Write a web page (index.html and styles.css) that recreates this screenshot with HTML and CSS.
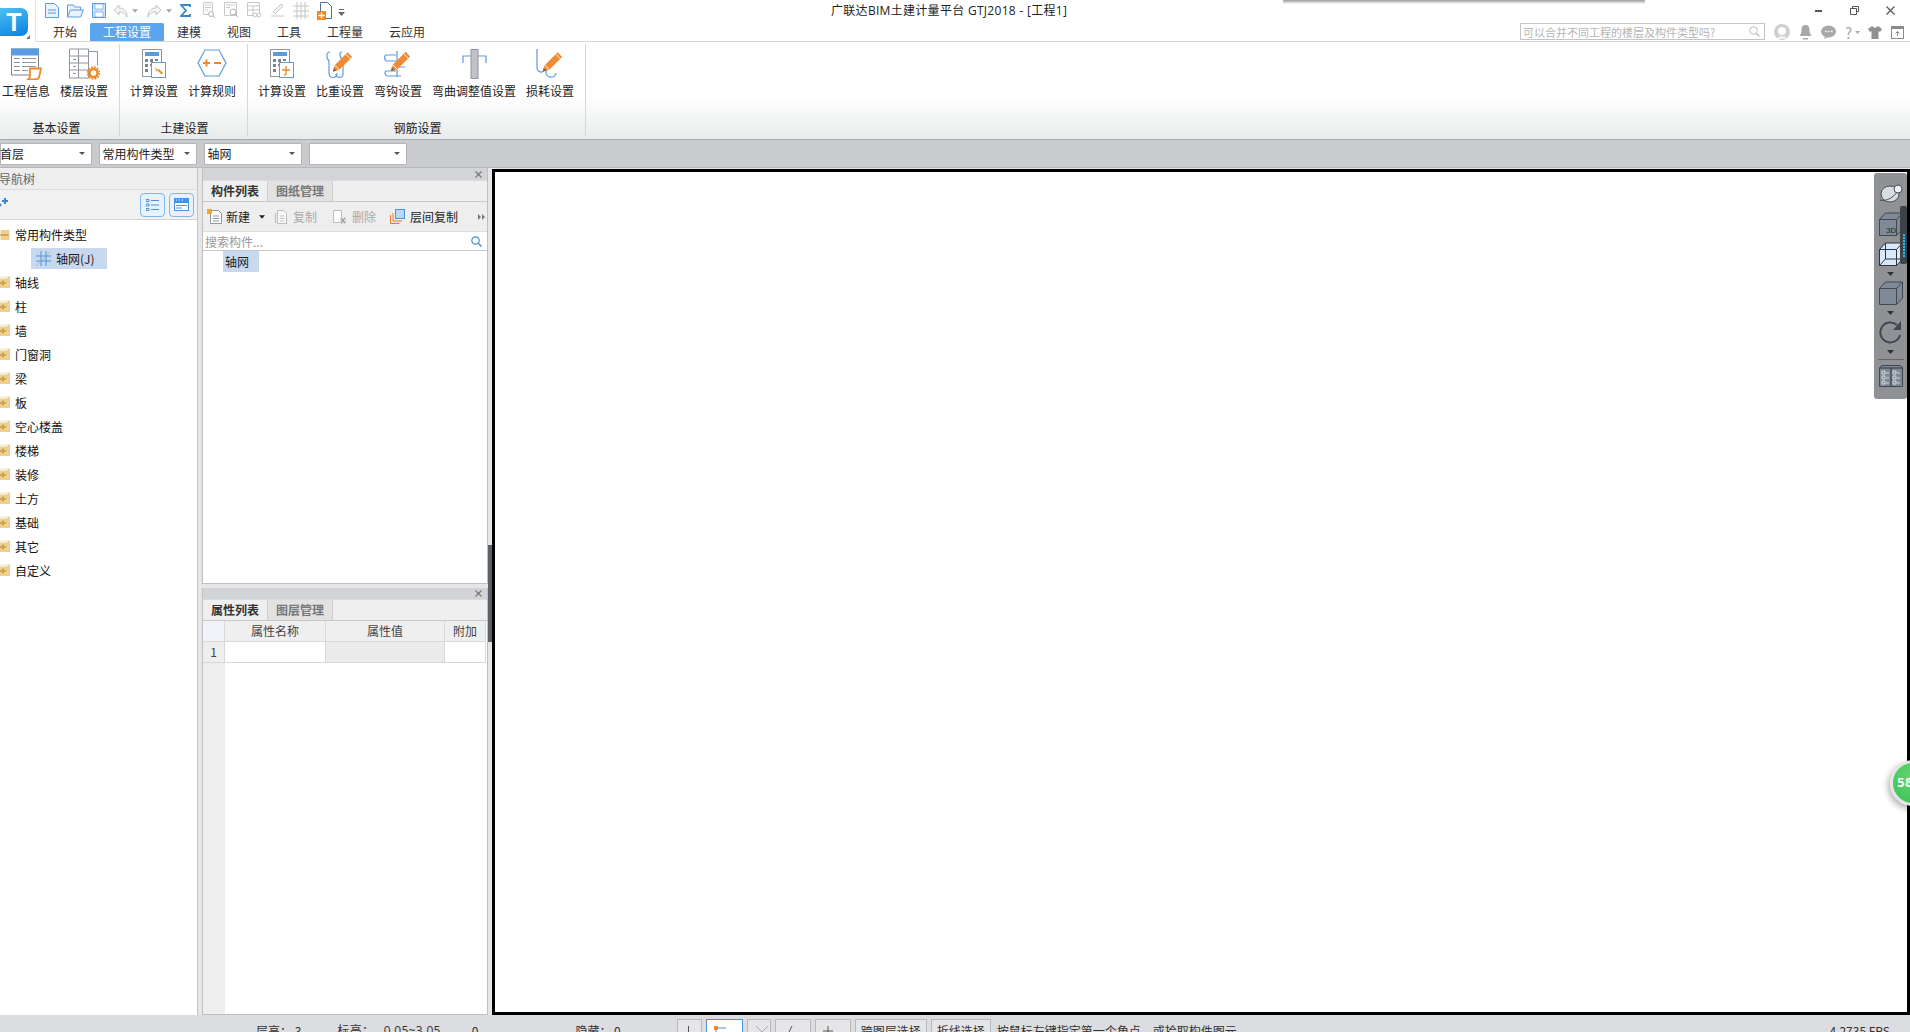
FILE: index.html
```html
<!DOCTYPE html>
<html lang="zh-CN">
<head>
  <meta charset="UTF-8">
  <title>广联达BIM土建计量平台 GTJ2018</title>
  <link rel="stylesheet" href="styles.css">
</head>
<body>
  <svg class="defs" width="0" height="0">
    <defs>
      <symbol id="pencil" viewBox="0 0 24 24">
        <path d="M1 23l2-7L17 2l5 5L8 21z" fill="#f08a34"/>
        <path d="M3 16l5 5M15 4l5 5" stroke="#fff" stroke-width="1" fill="none"/>
        <path d="M1 23l1-4 3 3z" fill="#8a5a30"/>
      </symbol>
      <symbol id="calc" viewBox="0 0 24 30">
        <rect x=".5" y=".5" width="19" height="27" fill="#fff" stroke="#8f959c"/>
        <rect x="3" y="3" width="14" height="4" fill="#5b9be0"/>
        <path d="M3 10h3v3H3zM8 10h3v3H8zM13 10h3v2h-3zM3 15h3v3H3zM8 15h3v2H8zM3 20h3v3H3z" fill="#7d8389"/>
        <rect x="9.500" y="13.500" width="14" height="15" fill="#fff" stroke="#5b9be0"/>
      </symbol>
      <symbol id="folder-plus" viewBox="0 0 10 12">
        <path d="M0 2.500h7l1-2h2v11.500H0z" fill="#f0cf8e"/>
        <path d="M0 1h8" stroke="#f3e3c0"/>
        <path d="M0 7h6M3 4.500v5" stroke="#c59a4a" stroke-width="1.500"/>
      </symbol>
      <symbol id="small-caret" viewBox="0 0 7 4">
        <path d="M0 0h7L3.500 4z" fill="currentColor"/>
      </symbol>
    </defs>
  </svg>

  <div class="app">
    <header class="topbar">
      <div class="logo-box">
        <div class="logo">T</div>
        <span class="logo-corner"></span>
      </div>
      <div class="topbar-main">
        <div class="title-row">
          <div class="qat">
            <svg class="q" width="14" height="15" viewBox="0 0 14 15"><path d="M.5.500h9l4 4v10H.5z" fill="#eaf3fc" stroke="#5b9be0"/><path d="M3 7h8M3 10h8" stroke="#5b9be0"/></svg>
            <svg class="q" width="17" height="15" viewBox="0 0 17 15"><path d="M.5 14V2h6l1 2h6v3M.5 14l3-7h13l-3 7z" fill="#eaf3fc" stroke="#5b9be0"/></svg>
            <svg class="q q-save" width="14" height="15" viewBox="0 0 14 15"><path d="M.5.500h13v14H.5z" fill="#cfe3f8" stroke="#5b9be0"/><path d="M3 1h8v5H3zM3 9h8v5H3z" fill="#fff" stroke="#5b9be0" stroke-width=".6"/></svg>
            <svg class="q q-undo" width="15" height="14" viewBox="0 0 15 14"><path d="M6 1L1 6l5 5V8c4 0 6 1 8 5 0-6-3-9-8-9z" fill="#f4f4f4" stroke="#c4c4c4"/></svg>
            <svg class="q-caret" width="6" height="4"><use href="#small-caret"/></svg>
            <svg class="q q-redo" width="15" height="14" viewBox="0 0 15 14"><path d="M9 1l5 5-5 5V8c-4 0-6 1-8 5 0-6 3-9 8-9z" fill="#f4f4f4" stroke="#c4c4c4"/></svg>
            <svg class="q-caret" width="6" height="4"><use href="#small-caret"/></svg>
            <svg class="q q-sigma" width="11" height="13" viewBox="0 0 11 13"><path d="M10 3V1H1l5 5.500L1 12h9v-2" fill="none" stroke="#3d86cf" stroke-width="1.800"/></svg>
            <svg class="q q-grey" width="15" height="17" viewBox="0 0 15 17"><path d="M2.500.500h9v12h-9zM4 3h6M4 5.500h6M4 8h3" fill="#fff" stroke="#c8c8c8"/><circle cx="10" cy="12" r="2.500" fill="#fff" stroke="#b4b4b4"/><path d="M12 14l2 2" stroke="#b4b4b4"/></svg>
            <svg class="q q-grey" width="15" height="17" viewBox="0 0 15 17"><path d="M.5.500h12v13H.5zM2 3h9M2 5.500h4" fill="#fff" stroke="#c8c8c8"/><circle cx="9" cy="10" r="3" fill="#fff" stroke="#b4b4b4"/><path d="M11 12l3 3" stroke="#b4b4b4"/></svg>
            <svg class="q q-grey" width="15" height="17" viewBox="0 0 15 17"><path d="M.5.500h12v13H.5zM.5 4h12M.5 8h12M6 4v9" fill="#fff" stroke="#c8c8c8"/><circle cx="8" cy="13" r="2" fill="#fff" stroke="#c4c4c4"/><circle cx="12" cy="13" r="2" fill="#fff" stroke="#c4c4c4"/></svg>
            <svg class="q q-grey" width="15" height="15" viewBox="0 0 15 15"><path d="M3 10l8-8 2 2-8 8zM1 14h13" fill="#f2f2f2" stroke="#c8c8c8"/></svg>
            <svg class="q q-grey" width="16" height="17" viewBox="0 0 16 17"><path d="M0 4h16M0 9h16M0 14h16M4 0v17M8 0v17M12 0v17" fill="none" stroke="#c4c4c4"/></svg>
            <svg class="q q-grey" width="15" height="18" viewBox="0 0 15 18"><path d="M3.500.500h7l4 4v12h-11z" fill="#fff" stroke="#50708e"/><rect y="9" width="9" height="9" fill="#ef8a25"/><path d="M1.500 13.500h6M4.500 10.500v6" stroke="#fff" stroke-width="1.300"/></svg>
            <svg class="q-more" width="7" height="7" viewBox="0 0 7 7"><path d="M1 .5h5" stroke="#666"/><path d="M0 3h7L3.500 7z" fill="#666"/></svg>
          </div>
          <h1 class="app-title">广联达BIM土建计量平台 GTJ2018 - [工程1]</h1>
          <div class="win-ctrl">
            <svg width="8" height="3"><rect y="1" width="7" height="2" fill="#555"/></svg>
            <svg width="9" height="9" viewBox="0 0 9 9"><path d="M2.500 2.500V.5h6v5h-2M.5 2.500h6v6h-6z" fill="none" stroke="#555"/></svg>
            <svg width="9" height="9" viewBox="0 0 9 9"><path d="M.5.500l8 8M8.500.500l-8 8" stroke="#555" stroke-width="1.200"/></svg>
          </div>
        </div>
        <div class="tab-row">
          <nav class="tabs">
            <span class="tab">开始</span>
            <span class="tab active">工程设置</span>
            <span class="tab">建模</span>
            <span class="tab">视图</span>
            <span class="tab">工具</span>
            <span class="tab">工程量</span>
            <span class="tab">云应用</span>
          </nav>
          <div class="help-search">
            <span>可以合并不同工程的楼层及构件类型吗?</span>
            <svg width="11" height="11" viewBox="0 0 11 11"><circle cx="4.500" cy="4.500" r="3.800" fill="none" stroke="#bbb"/><path d="M7.500 7.500l3 3" stroke="#bbb" stroke-width="1.300"/></svg>
          </div>
          <div class="user-icons">
            <svg width="16" height="16" viewBox="0 0 16 16"><circle cx="8" cy="8" r="8" fill="#cfcfcf"/><circle cx="8" cy="7" r="4" fill="#fff"/><path d="M3 15c1-4 9-4 10 0" fill="#f2f2f2"/></svg>
            <svg width="13" height="15" viewBox="0 0 13 15"><path d="M6.500 0c3 0 4 2 4 5 0 3 1 4 2 6H.5c1-2 2-3 2-6 0-3 1-5 4-5z" fill="#a8a8a8"/><path d="M4 13h5v1.500H4z" fill="#a8a8a8"/></svg>
            <svg width="15" height="14" viewBox="0 0 15 14"><ellipse cx="7.500" cy="6.500" rx="7.500" ry="6" fill="#a8a8a8"/><path d="M4 11l-1 3 4-2z" fill="#a8a8a8"/><path d="M4 6.500h1.500M7 6.500h1.500M10 6.500h1.500" stroke="#fff" stroke-width="1.500"/></svg>
            <span class="help-mark">?<svg width="5" height="3" viewBox="0 0 7 4"><use href="#small-caret"/></svg></span>
            <svg width="14" height="13" viewBox="0 0 14 13"><path d="M4 0L0 3l2 3 1.500-1v8h7V5L12 6l2-3-4-3-3 2z" fill="#909090"/></svg>
            <svg width="13" height="13" viewBox="0 0 13 13"><rect x=".5" y=".5" width="12" height="12" fill="#fff" stroke="#8a8a8a"/><rect width="13" height="3" fill="#8a8a8a"/><path d="M6.500 10V5.500M4.500 7.500l2-2 2 2" fill="none" stroke="#8a8a8a"/></svg>
          </div>
        </div>
      </div>
    </header>

    <section class="ribbon">
      <div class="rb-group rb-first">
        <div class="rb-items">
          <div class="rb-btn">
            <svg width="31" height="31" viewBox="0 0 31 31"><rect x=".5" y=".5" width="27" height="26" fill="#fff" stroke="#7d8389"/><rect width="28" height="7" fill="#5b9be0"/><path d="M3 10h6M11 10h14M3 14h6M11 14h14M3 18h6M11 18h14M3 22h6M11 22h6" stroke="#8f959c"/><path d="M19 20h11l-2 9c-1 2-3 2-4 2h-7c1-1 2-2 2-4z" fill="#fff" stroke="#ef8a25" stroke-width="1.800"/></svg>
            <span>工程信息</span>
          </div>
          <div class="rb-btn">
            <svg width="31" height="31" viewBox="0 0 31 31"><path d="M.5.500h19v29H.5zM.5 7.500h19M.5 14.500h19M.5 21.500h19M9.500.500v29M19.500 3h9v14" fill="#fff" stroke="#8f959c"/><path d="M4 11h3M4 18h3M4 25h3" stroke="#8f959c"/><circle cx="24.500" cy="24.500" r="4" fill="#fff" stroke="#ef8a25" stroke-width="2.500"/><circle cx="24.500" cy="24.500" r="6" fill="none" stroke="#ef8a25" stroke-width="1.500" stroke-dasharray="2 1.100"/></svg>
            <span>楼层设置</span>
          </div>
        </div>
        <div class="rb-label">基本设置</div>
      </div>
      <div class="rb-group">
        <div class="rb-items">
          <div class="rb-btn">
            <svg width="24" height="30" viewBox="0 0 24 30"><use href="#calc"/><path d="M13 18l3 3 1-1 4 4-1.500 1.500-4-4-1 1z" fill="#ef8a25"/></svg>
            <span>计算设置</span>
          </div>
          <div class="rb-btn">
            <svg width="30" height="30" viewBox="0 0 30 30"><path d="M8 1h14l7 13-7 13H8L1 14z" fill="#fff" stroke="#5b9be0" stroke-width="1.200"/><path d="M6 14h7M9.500 10.500v7M17 14h7" stroke="#ef8a25" stroke-width="2"/></svg>
            <span>计算规则</span>
          </div>
        </div>
        <div class="rb-label">土建设置</div>
      </div>
      <div class="rb-group">
        <div class="rb-items">
          <div class="rb-btn">
            <svg width="24" height="30" viewBox="0 0 24 30"><use href="#calc"/><path d="M12 21h8M16 17v8c0 1-1 1-2 1" fill="none" stroke="#ef8a25" stroke-width="1.400"/></svg>
            <span>计算设置</span>
          </div>
          <div class="rb-btn">
            <svg width="28" height="30" viewBox="0 0 28 30"><path d="M4 3C0 3 0 9 3 12v12c0 6 8 6 8 0M16 3c-3 0-3 5 1 8v14c0 5-8 4-7 0" fill="none" stroke="#5b9be0" stroke-width="1.200"/><use href="#pencil" x="6" y="1" width="22" height="23"/></svg>
            <span>比重设置</span>
          </div>
          <div class="rb-btn">
            <svg width="28" height="30" viewBox="0 0 28 30"><path d="M12 6H2C0 6 0 12 3 12h9M12 22H2c-2 1-1 5 2 5h13M13 2v26M9 18h12" fill="none" stroke="#5b9be0" stroke-width="1.200"/><use href="#pencil" x="6" y="1" width="22" height="22"/></svg>
            <span>弯钩设置</span>
          </div>
          <div class="rb-btn">
            <svg width="25" height="30" viewBox="0 0 25 30"><path d="M1 14V7h23v7" fill="none" stroke="#5b9be0" stroke-width="1.200"/><rect x="9" y="0.500" width="7" height="29" fill="#bfc3c7" stroke="#8f959c"/></svg>
            <span>弯曲调整值设置</span>
          </div>
          <div class="rb-btn">
            <svg width="28" height="30" viewBox="0 0 28 30"><path d="M1 0v18c0 6 6 6 7 3 0-3 1-4 2-4M10 17v7c1 5 9 6 10 0" fill="none" stroke="#5b9be0" stroke-width="1.200"/><use href="#pencil" x="6" y="1" width="22" height="23"/></svg>
            <span>损耗设置</span>
          </div>
        </div>
        <div class="rb-label">钢筋设置</div>
      </div>
    </section>

    <section class="floor-bar">
      <div class="combo"><span class="combo-first">首层</span><i></i></div>
      <div class="combo"><span>常用构件类型</span><i></i></div>
      <div class="combo"><span>轴网</span><i></i></div>
      <div class="combo"><span></span><i></i></div>
    </section>

    <main class="workspace">
      <aside class="nav-panel">
        <div class="nav-head"><span>导航树</span></div>
        <div class="nav-tools">
          <svg class="nav-star" width="8" height="10" viewBox="0 0 8 10"><path d="M5 1v6M2 4h6" stroke="#3d86cf" stroke-width="2"/><circle cx="0" cy="8" r="1.500" fill="#3d86cf"/></svg>
          <div class="nav-btns">
            <span class="square-btn"><svg width="13" height="12" viewBox="0 0 13 12"><path d="M0 .5h3v2H0zM0 5h3v2H0zM0 9.500h3v2H0zM5 1.500h8M5 6h8M5 10.500h8" fill="none" stroke="#4a93dc"/></svg></span>
            <span class="square-btn"><svg width="15" height="13" viewBox="0 0 15 13"><rect x=".5" y=".5" width="14" height="12" fill="#fff" stroke="#4a93dc"/><rect width="15" height="5" fill="#4a93dc"/><path d="M2 7.500h11M2 10h6" stroke="#4a93dc"/><path d="M2 2h1M5 2h1M8 2h1" stroke="#fff"/></svg></span>
          </div>
        </div>
        <ul class="tree">
          <li class="tree-item">
            <svg width="11" height="12" viewBox="0 0 10 12"><path d="M0 2h9v10H0z" fill="#f0cf8e"/><path d="M0 7h8" stroke="#c59a4a" stroke-width="1.500"/></svg>
            常用构件类型
          </li>
          <li class="tree-leaf">
            <div class="leaf-sel">
              <svg width="15" height="15" viewBox="0 0 15 15"><path d="M5 0v15M10 0v15M0 5h15M0 10h15" stroke="#4a93dc"/><path d="M0 15L15 0" stroke="#a9a9a9" stroke-width=".7"/></svg>
              轴网(J)
            </div>
          </li>
          <li class="tree-item"><svg width="10" height="12"><use href="#folder-plus"/></svg>轴线</li>
          <li class="tree-item"><svg width="10" height="12"><use href="#folder-plus"/></svg>柱</li>
          <li class="tree-item"><svg width="10" height="12"><use href="#folder-plus"/></svg>墙</li>
          <li class="tree-item"><svg width="10" height="12"><use href="#folder-plus"/></svg>门窗洞</li>
          <li class="tree-item"><svg width="10" height="12"><use href="#folder-plus"/></svg>梁</li>
          <li class="tree-item"><svg width="10" height="12"><use href="#folder-plus"/></svg>板</li>
          <li class="tree-item"><svg width="10" height="12"><use href="#folder-plus"/></svg>空心楼盖</li>
          <li class="tree-item"><svg width="10" height="12"><use href="#folder-plus"/></svg>楼梯</li>
          <li class="tree-item"><svg width="10" height="12"><use href="#folder-plus"/></svg>装修</li>
          <li class="tree-item"><svg width="10" height="12"><use href="#folder-plus"/></svg>土方</li>
          <li class="tree-item"><svg width="10" height="12"><use href="#folder-plus"/></svg>基础</li>
          <li class="tree-item"><svg width="10" height="12"><use href="#folder-plus"/></svg>其它</li>
          <li class="tree-item"><svg width="10" height="12"><use href="#folder-plus"/></svg>自定义</li>
        </ul>
      </aside>

      <div class="mid-col">
        <section class="dock dock-top">
          <div class="dock-head"><svg width="7" height="7" viewBox="0 0 7 7"><path d="M.5.500l6 6M6.500.500l-6 6" stroke="#777" stroke-width="1.200"/></svg></div>
          <div class="dock-tabs">
            <span class="dock-tab on">构件列表</span>
            <span class="dock-tab">图纸管理</span>
          </div>
          <div class="list-tools">
            <span class="lt lt-new">
              <svg width="16" height="15" viewBox="0 0 16 15"><path d="M3.500 1.500h8l3 3v10h-11z" fill="#fff" stroke="#8f959c"/><path d="M6 7h6M6 9.500h6M6 12h6" stroke="#8f959c"/><rect width="5" height="5" fill="#f5a623"/></svg>
              新建
              <svg class="lt-caret" width="6" height="4"><use href="#small-caret"/></svg>
            </span>
            <span class="lt lt-off">
              <svg width="12" height="14" viewBox="0 0 12 14"><path d="M2.500.500h6l3 3v10h-9zM.5 3v10" fill="#fff" stroke="#bbb"/><path d="M4.500 6h5M4.500 8.500h5M4.500 11h5" stroke="#bbb"/></svg>
              复制
            </span>
            <span class="lt lt-off">
              <svg width="13" height="14" viewBox="0 0 13 14"><path d="M.5.500h8v12h-8z" fill="#fff" stroke="#bbb"/><path d="M7 7h6v7H7z" fill="#ddd"/><path d="M8 8l4 5M12 8l-4 5" stroke="#888"/></svg>
              删除
            </span>
            <span class="lt lt-copy">
              <svg width="15" height="15" viewBox="0 0 15 15"><path d="M.5 6v8.500h9" fill="none" stroke="#e07b2c"/><path d="M3 4v8h9" fill="none" stroke="#e07b2c"/><rect x="5.500" y=".5" width="9" height="9" fill="#bcd8f6" stroke="#4a93dc"/></svg>
              层间复制
            </span>
            <svg class="lt-more" width="7" height="6" viewBox="0 0 7 6"><path d="M0 0l3 3-3 3zM4 0l3 3-3 3z" fill="#777"/></svg>
          </div>
          <div class="list-search">
            <span>搜索构件...</span>
            <svg width="11" height="11" viewBox="0 0 11 11"><circle cx="4.500" cy="4.500" r="3.700" fill="none" stroke="#3d90c8" stroke-width="1.200"/><path d="M7.500 7.500l3 3" stroke="#3d90c8" stroke-width="1.500"/></svg>
          </div>
          <div class="list-body"><span class="list-sel">轴网</span></div>
        </section>

        <section class="dock dock-bottom">
          <div class="dock-head"><svg width="7" height="7" viewBox="0 0 7 7"><path d="M.5.500l6 6M6.500.500l-6 6" stroke="#777" stroke-width="1.200"/></svg></div>
          <div class="dock-tabs">
            <span class="dock-tab on">属性列表</span>
            <span class="dock-tab">图层管理</span>
          </div>
          <div class="prop-grid">
            <div class="pc pc-corner"></div>
            <div class="pc pc-head">属性名称</div>
            <div class="pc pc-head">属性值</div>
            <div class="pc pc-head">附加</div>
            <div class="pc pc-num">1</div>
            <div class="pc"></div>
            <div class="pc pc-grey"></div>
            <div class="pc"></div>
            <div class="pc-rest"></div>
          </div>
        </section>
      </div>

      <div class="splitter"><span></span></div>

      <div class="canvas">
        <div class="view-tools">
          <svg class="vt-orbit" width="24" height="20" viewBox="0 0 24 20"><ellipse cx="11" cy="11" rx="9" ry="8" fill="#d8dde2" stroke="#444d56"/><circle cx="19" cy="6" r="4" fill="#eef1f3" stroke="#444d56"/><path d="M1 17c6 2 14-3 17-8" fill="none" stroke="#444d56"/></svg>
          <svg width="24" height="24" viewBox="0 0 24 24"><path d="M.5 7.500h17v16H.5zM.5 7.500l6-6.500h17v16l-6 6.500M17.500 7.500l6-6.500" fill="#7f8a96" stroke="#3f4852"/><text class="vt-3d" x="7" y="21">3D</text></svg>
          <svg width="24" height="24" viewBox="0 0 24 24"><path d="M.5 7.500h17v16H.5zM.5 7.500l6-6.500h17v16l-6 6.500M17.500 7.500l6-6.500" fill="#d7e9fb" stroke="#2d3640"/><path d="M6.500 1v16h17M6.500 17l-6 6.500" stroke="#2d3640" fill="none"/></svg>
          <svg class="vt-caret" width="7" height="4"><use href="#small-caret"/></svg>
          <svg width="24" height="24" viewBox="0 0 24 24"><path d="M.5 7.500h17v16H.5zM.5 7.500l6-6.500h17v16l-6 6.500M17.500 7.500l6-6.500" fill="#7f8a96" stroke="#3f4852"/></svg>
          <svg class="vt-caret" width="7" height="4"><use href="#small-caret"/></svg>
          <svg width="24" height="24" viewBox="0 0 24 24"><path d="M21 15a10 10 0 1 1-3-10" fill="none" stroke="#3f4852" stroke-width="2"/><path d="M22 1v9h-8z" fill="#3f4852"/></svg>
          <svg class="vt-caret" width="7" height="4"><use href="#small-caret"/></svg>
          <span class="vt-line"></span>
          <svg width="24" height="22" viewBox="0 0 24 22"><path d="M.5 3l2-2.500h19l2 2.500v18.500H.5z" fill="#7f8a96" stroke="#3f4852"/><path d="M.5 3h23M12 3v18" stroke="#2d3640"/><path d="M3 6h3v3H3zM3 11h3v3H3zM3 16h3v3H3zM14 6h3v3h-3zM14 11h3v3h-3zM14 16h3v3h-3zM7 8h3M7 13h3M7 18h3M18 8h3M18 13h3M18 18h3" fill="none" stroke="#e8eaec" stroke-width=".8"/></svg>
          <div class="vt-slider"><span></span></div>
        </div>
        <div class="fps-ball"><span>58</span></div>
      </div>
    </main>

    <footer class="status">
      <span class="st st-floor">层高： 3</span>
      <span class="st st-elev">标高： 0.05~3.05</span>
      <span class="st st-zero">0</span>
      <span class="st st-hide">隐藏： 0</span>
      <div class="st-btns">
        <span class="sb sb-ortho"><svg width="8" height="14"><path d="M3.500 0v14" stroke="#555"/></svg></span>
        <span class="sb sb-snap"><svg width="14" height="12" viewBox="0 0 14 12"><path d="M2 2h10M2 2v10" stroke="#4a93dc" fill="none"/><rect width="4" height="4" fill="#ef8a25"/></svg><svg class="sb-caret" width="5" height="3" viewBox="0 0 7 4"><use href="#small-caret"/></svg></span>
        <span class="sb sb-dis"><svg width="14" height="12" viewBox="0 0 14 12"><path d="M1 0l6 6 6-6M7 6v6" stroke="#aaa" fill="none"/></svg></span>
        <span class="sb sb-arrow"><svg width="12" height="12" viewBox="0 0 12 12"><path d="M9 0L3 12" stroke="#555"/><path d="M0 11h5v1H0z" fill="#555"/></svg><svg class="sb-caret" width="5" height="3" viewBox="0 0 7 4"><use href="#small-caret"/></svg></span>
        <span class="sb sb-arrow"><svg width="12" height="12" viewBox="0 0 12 12"><path d="M5 0v12M0 5h10" stroke="#555"/></svg><svg class="sb-caret" width="5" height="3" viewBox="0 0 7 4"><use href="#small-caret"/></svg></span>
        <span class="sb sb-text sb-layer">跨图层选择</span>
        <span class="sb sb-text sb-poly">折线选择</span>
      </div>
      <span class="st st-hint">按鼠标左键指定第一个角点，或拾取构件图元</span>
      <span class="st st-fps">4.2735 FPS</span>
    </footer>
  </div>

  <div class="top-shadow"></div>
</body>
</html>
```

FILE: styles.css
```css
* {
  margin: 0;
  padding: 0;
  box-sizing: border-box;
}

html, body {
  height: 100%;
  overflow: hidden;
}

body {
  font-family: "Noto Sans CJK SC", "Liberation Sans", sans-serif;
  font-size: 12px;
  color: #222;
  background: #fff;
}

ul {
  list-style: none;
}

.defs {
  position: absolute;
}

svg {
  display: block;
  flex: none;
}

.app {
  height: 1032px;
  display: grid;
  grid-template-rows: 42px 98px 28px 1fr 17px;
}

/* top bar */
.topbar {
  display: flex;
  background: #fff;
}

.logo-box {
  position: relative;
  width: 36px;
  border-right: 1px solid #e2e2e2;
  padding-top: 8px;
}

.logo {
  width: 28px;
  height: 28px;
  border-radius: 0 7px 7px 0;
  background: linear-gradient(160deg, #4cc1f3, #0b7fe0);
  color: #fff;
  font: bold 25px/28px "Liberation Sans", sans-serif;
  text-align: center;
}

.logo-corner {
  position: absolute;
  right: 5px;
  bottom: 3px;
  border-style: solid;
  border-width: 0 0 4px 4px;
  border-color: transparent transparent #777 transparent;
}

.topbar-main {
  flex: 1;
  min-width: 0;
  display: flex;
  flex-direction: column;
  border-bottom: 1px solid #d8d8d8;
}

.title-row {
  height: 23px;
  display: flex;
}

.qat {
  flex: 0 0 795px;
  display: flex;
  align-items: flex-start;
  padding: 3px 0 0 9px;
  color: #a8a8a8;
}

.q {
  margin-right: 8px;
}

.q-save {
  margin-right: 6px;
}

.q-undo, .q-redo {
  margin: 1px 4px 0 1px;
}

.q-caret {
  margin: 6px 8px 0 0;
}

.q-sigma {
  margin: 1px 10px 0 0;
}

.q-grey {
  margin-right: 8px;
  margin-top: -1px;
}

.q-more {
  margin: 6px 0 0 -2px;
}

.app-title {
  font-family: "Open Sans", "Noto Sans CJK SC", sans-serif;
  font-size: 12px;
  font-weight: normal;
  line-height: 20px;
  letter-spacing: .3px;
  padding-top: 1px;
  white-space: nowrap;
}

.win-ctrl {
  margin-left: auto;
  display: flex;
  align-items: center;
  gap: 27px;
  height: 20px;
  padding-right: 15px;
}

.tab-row {
  flex: 1;
  display: flex;
  align-items: flex-end;
}

.tabs {
  display: flex;
  margin-left: 4px;
  flex: 0 0 1480px;
}

.tab {
  height: 18px;
  line-height: 18px;
  padding: 0 13px;
  color: #333;
}

.tab.active {
  background: #5aa5ee;
  color: #fff;
  border-radius: 2px 2px 0 0;
}

.help-search {
  width: 245px;
  height: 17px;
  margin-bottom: 1px;
  border: 1px solid #c4c4c4;
  display: flex;
  align-items: center;
  justify-content: space-between;
  padding: 0 4px 0 2px;
  font-size: 11px;
  color: #b4b4b4;
  white-space: nowrap;
}

.user-icons {
  display: flex;
  align-items: center;
  gap: 9px;
  height: 18px;
  margin-left: 9px;
}

.help-mark {
  display: flex;
  align-items: center;
  gap: 3px;
  color: #a8a8a8;
  font-size: 15px;
  line-height: 15px;
  width: 14px;
}

/* ribbon */
.ribbon {
  display: flex;
  background: linear-gradient(#fff 55%, #e9ebeb);
  border-bottom: 1px solid #a9abae;
}

.rb-group {
  border-right: 1px solid #d5d7d8;
  margin: 2px 0 2px;
  padding: 0 11px 0 10px;
  display: flex;
  flex-direction: column;
}

.rb-first {
  width: 120px;
  padding: 0 0 0 2px;
}

.rb-group:nth-child(2) {
  width: 128px;
}

.rb-items {
  display: flex;
  gap: 10px;
}

.rb-btn {
  display: flex;
  flex-direction: column;
  align-items: center;
  white-space: nowrap;
}

.rb-btn svg {
  height: 32px;
  margin-top: 4px;
}

.rb-btn span {
  margin-top: 3px;
  line-height: 16px;
}

.rb-label {
  margin-top: auto;
  text-align: center;
  line-height: 16px;
  padding-left: 3px;
  padding-bottom: 1px;
}

.rb-first .rb-label {
  padding: 0 8px 1px 0;
}

/* floor / type selectors */
.floor-bar {
  background: #c9cbce;
  display: flex;
  align-items: center;
  gap: 6.5px;
  border-bottom: 1px solid #b7b9bc;
}

.combo {
  width: 98.5px;
  height: 22px;
  background: #fff;
  border: 1px solid #b5b5b5;
  border-radius: 1px;
  display: flex;
  align-items: center;
  justify-content: space-between;
  padding: 0 6px 0 3px;
}

.combo:first-child {
  width: 92px;
}

.combo-first {
  margin-left: -4px;
}

.combo i {
  border-style: solid;
  border-width: 3px 3px 0;
  border-color: #555 transparent transparent;
}

/* workspace */
.workspace {
  display: flex;
  min-height: 0;
  background: #e6e6e9;
}

.nav-panel {
  width: 198px;
  border-right: 1px solid #c4c4c4;
  background: #fff;
  display: flex;
  flex-direction: column;
  overflow: hidden;
}

.nav-head {
  height: 22px;
  background: #eeeeee;
  border-bottom: 1px solid #dcdcdc;
  line-height: 21px;
  color: #666;
}

.nav-head span {
  margin-left: -1px;
  display: inline-block;
}

.nav-tools {
  height: 30px;
  background: #f1f1f1;
  border-bottom: 1px solid #d4d4d4;
  display: flex;
  align-items: center;
  justify-content: space-between;
  padding-right: 3px;
}

.nav-star {
  margin-top: -6px;
}

.nav-btns {
  display: flex;
  gap: 4px;
}

.square-btn {
  width: 25px;
  height: 24px;
  background: #e8f2fc;
  border: 1px solid #7cb7ef;
  border-radius: 4px;
  display: flex;
  align-items: center;
  justify-content: center;
}

.tree {
  padding-top: 2px;
  flex: 1;
}

.tree-item {
  height: 24px;
  display: flex;
  align-items: center;
  gap: 5px;
  color: #111;
}

.tree-item:first-child {
  gap: 4px;
}

.tree-leaf {
  height: 24px;
  padding: 2px 0 0 31px;
}

.leaf-sel {
  width: 76px;
  height: 21px;
  background: #c7d8ef;
  display: flex;
  align-items: center;
  gap: 5px;
  padding-left: 5px;
  white-space: nowrap;
}

.mid-col {
  width: 286px;
  margin-left: 4px;
  display: flex;
  flex-direction: column;
  gap: 4px;
}

.dock {
  background: #fff;
  border: 1px solid #c0c0c0;
  border-top: 0;
  display: flex;
  flex-direction: column;
}

.dock-top {
  height: 416px;
}

.dock-bottom {
  flex: 1;
  min-height: 0;
}

.dock-head {
  height: 12px;
  background: #d2d4d8;
  display: flex;
  align-items: center;
  justify-content: flex-end;
  padding-right: 5px;
  flex: none;
}

.dock-bottom .dock-head {
  height: 11px;
}

.dock-tabs {
  height: 22px;
  background: #efefef;
  border-top: 1px solid #dcdcdc;
  border-bottom: 1px solid #c8c8c8;
  display: flex;
  flex: none;
}

.dock-tab {
  width: 65px;
  line-height: 19px;
  text-align: center;
  background: #e2e2e2;
  color: #777;
  font-weight: bold;
  border-right: 1px solid #cfcfcf;
}

.dock-tab.on {
  background: #efefef;
  color: #333;
}

.list-tools {
  height: 30px;
  background: #eeeeee;
  display: flex;
  align-items: center;
  flex: none;
  border-bottom: 1px solid #ddd;
}

.lt {
  display: flex;
  align-items: center;
  white-space: nowrap;
  gap: 3px;
}

.lt-new {
  margin-left: 4px;
}

.lt-caret {
  margin-left: 6px;
}

.lt-off {
  color: #aaa;
  gap: 6px;
}

.lt-off:nth-child(2) {
  margin-left: 10px;
}

.lt-off:nth-child(3) {
  margin-left: 16px;
}

.lt-copy {
  margin-left: 14px;
  gap: 5px;
}

.lt-more {
  margin-left: auto;
  margin-right: 2px;
}

.list-search {
  height: 19px;
  border-bottom: 1px solid #c8c8c8;
  display: flex;
  align-items: center;
  justify-content: space-between;
  padding: 0 5px 0 2px;
  color: #999;
  flex: none;
}

.list-body {
  flex: 1;
  padding-left: 20px;
}

.list-sel {
  display: block;
  width: 36px;
  height: 21px;
  line-height: 21px;
  padding-left: 2px;
  background: #c7d8ef;
}

.prop-grid {
  flex: 1;
  display: grid;
  grid-template-columns: 22px 101px 119px 41px 1fr;
  grid-template-rows: 21px 21px 1fr;
}

.pc {
  border-right: 1px solid #d8d8d8;
  border-bottom: 1px solid #d8d8d8;
  text-align: center;
  line-height: 20px;
}

.pc-head {
  background: #efefef;
  color: #444;
}

.pc-corner {
  background: #f0f3f8;
}

.pc-num {
  background: #eeeeee;
  color: #444;
}

.pc-grey {
  background: #ebebeb;
}

.prop-grid .pc:nth-child(4), .prop-grid .pc:nth-child(8) {
  grid-column: 4;
}

.prop-grid .pc:nth-child(5) {
  grid-column: 1;
}

.pc-rest {
  grid-column: 1;
  grid-row: 3;
  background: #eeeeee;
}

.splitter {
  width: 4px;
  flex: none;
}

.splitter span {
  display: block;
  width: 4px;
  height: 97px;
  margin-top: 377px;
  background: #5a6068;
}

/* drawing area */
.canvas {
  flex: 1;
  position: relative;
  background: #fff;
  border: 3px solid #000;
  margin-top: 1px;
}

.view-tools {
  position: absolute;
  top: 0;
  right: 0;
  width: 33px;
  height: 226px;
  margin-top: 1px;
  background: #8f9194;
  border-radius: 3px;
  display: flex;
  flex-direction: column;
  align-items: center;
  padding-top: 10px;
  color: #333;
}

.view-tools > svg {
  margin-bottom: 6px;
}

.view-tools > .vt-orbit {
  margin-bottom: 9px;
}

.view-tools > .vt-caret {
  margin: 0 0 5px;
}

.vt-3d {
  font: 8px "Liberation Sans", sans-serif;
  fill: #1f262c;
}

.vt-line {
  width: 26px;
  height: 1px;
  background: #666;
  margin-bottom: 5px;
}

.vt-slider {
  position: absolute;
  top: 33px;
  right: 0;
  width: 7px;
  height: 58px;
  background: #3c4248;
  border-radius: 2px;
}

.vt-slider span {
  position: absolute;
  left: 3px;
  top: 28px;
  width: 2px;
  height: 24px;
  background: repeating-linear-gradient(#2fb4ee 0 2px, #1c5c7c 2px 3px);
}

.fps-ball {
  position: absolute;
  top: 588px;
  right: -29px;
  width: 46px;
  height: 46px;
  border-radius: 50%;
  background: radial-gradient(circle at 50% 35%, #62d96f, #3cbe57);
  border: 3px solid #e4e6e6;
  box-shadow: -2px 3px 6px rgba(0,0,0,0.3);
  color: #fff;
  font: bold 13px/40px "DejaVu Sans Mono", monospace;
  padding-left: 4px;
}

/* status bar */
.status {
  background: #dcdde0;
  display: flex;
  align-items: flex-start;
  overflow: hidden;
  color: #333;
}

.st {
  margin-top: 8px;
  line-height: 16px;
  white-space: nowrap;
  flex: none;
}

.st-floor {
  margin-left: 256px;
}

.st-elev {
  margin-left: 36px;
  font-family: "Open Sans", "Noto Sans CJK SC", sans-serif;
  word-spacing: 6px;
  letter-spacing: .3px;
}

.st-zero {
  margin-left: 31px;
}

.st-hide {
  margin-left: 97px;
}

.st-btns {
  display: flex;
  margin: 4px 0 0 56px;
  gap: 4px;
}

.sb {
  height: 26px;
  background: #e6e6e8;
  border: 1px solid #b9b9bc;
  display: flex;
  padding: 6px 0 0 7px;
  gap: 2px;
}

.sb-ortho {
  width: 25px;
}

.sb-snap {
  width: 37px;
  background: #fff;
  border-color: #4a93dc;
}

.sb-dis {
  width: 24px;
}

.sb-arrow {
  width: 36px;
}

.sb-caret {
  margin-top: 8px;
}

.sb-text {
  padding: 3px 0 0;
  justify-content: center;
  line-height: 16px;
  white-space: nowrap;
}

.sb-layer {
  width: 72px;
}

.sb-poly {
  width: 60px;
}

.st-hint {
  margin-left: 6px;
}

.st-fps {
  margin-left: auto;
  margin-right: 20px;
}

.top-shadow {
  position: absolute;
  left: 1283px;
  top: 0;
  width: 362px;
  height: 4px;
  background: linear-gradient(#9a9a9a, #fff);
}
```
